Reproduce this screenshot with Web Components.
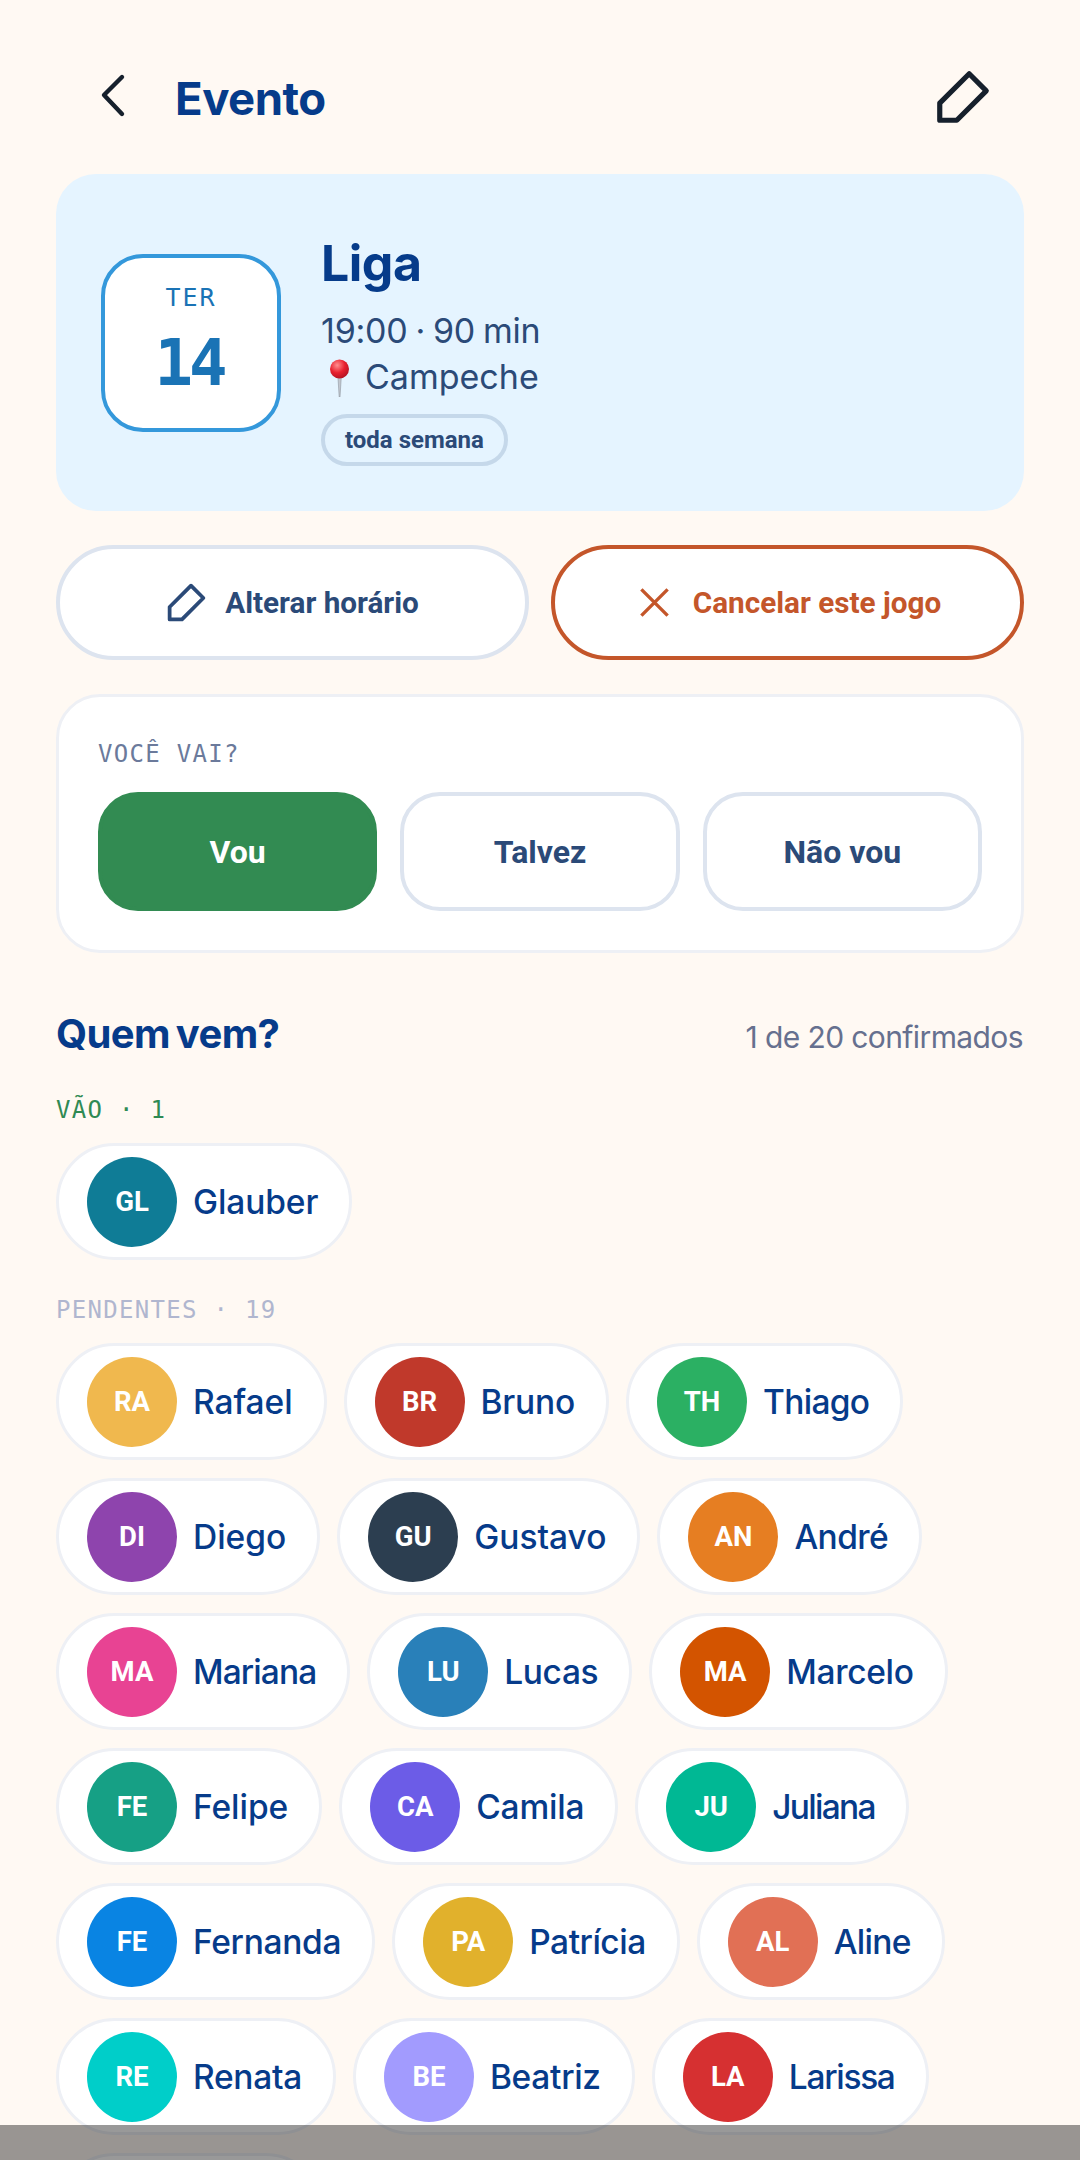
<!DOCTYPE html>
<html lang="pt-BR">
<head>
<meta charset="utf-8">
<title>Evento</title>
<style>
  html, body { margin: 0; height: 2160px; overflow: hidden; }
  body { background: #fff9f3; font-family: 'Inter', 'Noto Sans', sans-serif; }
  main { display: flex; flex-direction: column; padding: 0 56px; }
</style>
</head>
<body>
<main>
  <evento-header titulo="Evento"></evento-header>
  <evento-hero dia="TER" numero="14" nome="Liga" horario="19:00 · 90 min" local="Campeche" tag="toda semana"></evento-hero>
  <evento-acoes></evento-acoes>
  <evento-rsvp></evento-rsvp>
  <evento-titulo-secao></evento-titulo-secao>

  <evento-grupo rotulo="VÃO · 1" cor="#2f8a53">
    <evento-pessoa nome="Glauber" iniciais="GL" cor="#0f7c96" ajuste="-0.1"></evento-pessoa>
  </evento-grupo>

  <evento-grupo rotulo="PENDENTES · 19" cor="#b0b6cf">
    <evento-pessoa nome="Rafael" iniciais="RA" cor="#f0b84e" ajuste="-0.05"></evento-pessoa>
    <evento-pessoa nome="Bruno" iniciais="BR" cor="#c0392b" ajuste="-0.2"></evento-pessoa>
    <evento-pessoa nome="Thiago" iniciais="TH" cor="#2bb063" ajuste="-0.7"></evento-pessoa>
    <evento-pessoa nome="Diego" iniciais="DI" cor="#8e44ad" ajuste="0"></evento-pessoa>
    <evento-pessoa nome="Gustavo" iniciais="GU" cor="#2c3e50" ajuste="0"></evento-pessoa>
    <evento-pessoa nome="André" iniciais="AN" cor="#e67e22" ajuste="-0.6"></evento-pessoa>
    <evento-pessoa nome="Mariana" iniciais="MA" cor="#e84393" ajuste="-0.9"></evento-pessoa>
    <evento-pessoa nome="Lucas" iniciais="LU" cor="#2980b9" ajuste="-0.4"></evento-pessoa>
    <evento-pessoa nome="Marcelo" iniciais="MA" cor="#d35400" ajuste="-0.3"></evento-pessoa>
    <evento-pessoa nome="Felipe" iniciais="FE" cor="#16a085" ajuste="-0.05"></evento-pessoa>
    <evento-pessoa nome="Camila" iniciais="CA" cor="#6c5ce7" ajuste="-0.2"></evento-pessoa>
    <evento-pessoa nome="Juliana" iniciais="JU" cor="#00b894" ajuste="-1.7"></evento-pessoa>
    <evento-pessoa nome="Fernanda" iniciais="FE" cor="#0984e3" ajuste="-0.3"></evento-pessoa>
    <evento-pessoa nome="Patrícia" iniciais="PA" cor="#e1b12c" ajuste="-0.5"></evento-pessoa>
    <evento-pessoa nome="Aline" iniciais="AL" cor="#e17055" ajuste="-0.7"></evento-pessoa>
    <evento-pessoa nome="Renata" iniciais="RE" cor="#00cec9" ajuste="-0.3"></evento-pessoa>
    <evento-pessoa nome="Beatriz" iniciais="BE" cor="#a29bfe" ajuste="-0.3"></evento-pessoa>
    <evento-pessoa nome="Larissa" iniciais="LA" cor="#d63031" ajuste="-1.3"></evento-pessoa>
    <evento-pessoa nome="" iniciais="" cor="transparent" style="width: 268px"></evento-pessoa>
  </evento-grupo>
</main>
<barra-sistema></barra-sistema>

<script>
const PENCIL = `<path d="M14.4 3 21 9.6 9.6 21H3v-6.6z" fill="none" stroke="currentColor" stroke-width="2" stroke-linejoin="round"/>`;

class EventoHeader extends HTMLElement {
  constructor() {
    super();
    this.attachShadow({ mode: 'open' });
  }

  connectedCallback() {
    this.shadowRoot.innerHTML = `
      <style>
        :host { display: flex; align-items: center; box-sizing: border-box; height: 174px; padding-top: 22px; color: #16202c; }
        .back { width: 34px; height: 48px; margin: -6px 0 0 42px; flex: none; }
        h1 { margin: 0 0 0 43px; font: 700 45.5px 'Inter', sans-serif; letter-spacing: -0.5px; color: #063b8a; flex: 1; }
        .edit { width: 62px; height: 62px; margin: -3px 30px 0 0; flex: none; }
      </style>
      <svg class="back" viewBox="0 0 34 48"><path d="M24 6 6 24l18 19" fill="none" stroke="currentColor" stroke-width="4.4" stroke-linecap="round" stroke-linejoin="round"/></svg>
      <h1>${this.getAttribute('titulo')}</h1>
      <svg class="edit" viewBox="0 0 24 24">${PENCIL}</svg>
    `;
  }
}

class EventoHero extends HTMLElement {
  constructor() {
    super();
    this.attachShadow({ mode: 'open' });
  }

  connectedCallback() {
    const a = (n) => this.getAttribute(n);
    this.shadowRoot.innerHTML = `
      <style>
        :host { display: flex; align-items: center; gap: 40px; box-sizing: border-box; height: 337px; padding: 0 45px; background: #e5f4ff; border-radius: 40px; }
        .data { box-sizing: border-box; width: 180px; height: 178px; flex: none; display: flex; flex-direction: column; align-items: center; background: #fff; border: 4px solid #3498db; border-radius: 42px; color: #1a73b5; }
        .dia { margin-top: 22px; font: 400 25px/36px 'DejaVu Sans Mono', monospace; letter-spacing: 2px; }
        .num { margin: 11px 4px 0 0; font: 700 64px/72px 'DejaVu Sans Mono', monospace; letter-spacing: -4px; }
        h2 { margin: 0 0 14px; font: 700 50px/62px 'Inter', sans-serif; letter-spacing: -0.5px; color: #063b8a; }
        p { margin: 0; font: 400 34px/46px 'Inter', sans-serif; color: #2b4a78; }
        .hora { letter-spacing: -0.2px; word-spacing: -1.5px; }
        .info { display: flex; flex-direction: column; align-items: flex-start; margin-top: 12px; }
        .local { display: flex; align-items: center; gap: 6px; }
        .pin { width: 38px; height: 40px; }
        .tag { box-sizing: border-box; height: 52px; margin-top: 14px; padding: 0 20px; display: flex; align-items: center; border: 4px solid #c5d8ea; border-radius: 26px; font: 700 24px 'Roboto', sans-serif; color: #2b4a78; }
      </style>
      <div class="data"><span class="dia">${a('dia')}</span><span class="num">${a('numero')}</span></div>
      <div class="info">
        <h2>${a('nome')}</h2>
        <p class="hora">${a('horario')}</p>
        <p class="local">
          <svg class="pin" viewBox="0 0 38 40">
            <defs><radialGradient id="g" cx=".38" cy=".3" r=".8"><stop offset="0" stop-color="#ff8f8f"/><stop offset=".5" stop-color="#e8202f"/><stop offset="1" stop-color="#a80f1f"/></radialGradient></defs>
            <path d="M16.8 18h3.6l-1.4 22h-.8z" fill="#c3c8d0" stroke="#8f959f" stroke-width=".6"/>
            <circle cx="18.5" cy="12" r="9.5" fill="url(#g)"/>
          </svg>
          <span>${a('local')}</span>
        </p>
        <span class="tag">${a('tag')}</span>
      </div>
    `;
  }
}

class EventoAcoes extends HTMLElement {
  constructor() {
    super();
    this.attachShadow({ mode: 'open' });
  }

  connectedCallback() {
    this.shadowRoot.innerHTML = `
      <style>
        :host { display: grid; grid-template-columns: 1fr 1fr; gap: 22px; margin-top: 34px; }
        div { box-sizing: border-box; height: 115px; display: flex; align-items: center; justify-content: center; gap: 16px; padding-right: 2px; background: #fff; border: 4px solid #dde4ef; border-radius: 58px; font: 700 29.7px 'Roboto', sans-serif; color: #2b4a78; }
        .cancel { border-color: #c4562a; color: #c4562a; }
        svg { width: 45px; height: 45px; }
      </style>
      <div><svg viewBox="0 0 24 24">${PENCIL}</svg>Alterar horário</div>
      <div class="cancel"><svg viewBox="0 0 24 24"><path d="M5 5l14 14M19 5 5 19" fill="none" stroke="currentColor" stroke-width="1.8"/></svg>Cancelar este jogo</div>
    `;
  }
}

class EventoRsvp extends HTMLElement {
  constructor() {
    super();
    this.attachShadow({ mode: 'open' });
  }

  connectedCallback() {
    this.shadowRoot.innerHTML = `
      <style>
        :host { display: block; box-sizing: border-box; height: 259px; margin-top: 34px; padding: 39px 39px 0 39px; background: #fff; border: 3px solid #eef0f5; border-radius: 44px; }
        .rotulo { display: block; font: 400 24px/36px 'DejaVu Sans Mono', monospace; letter-spacing: 1.3px; color: #6b7a9b; }
        .opcoes { display: grid; grid-template-columns: repeat(3, 1fr); gap: 23px; margin-top: 20px; }
        .op { box-sizing: border-box; height: 119px; display: flex; align-items: center; justify-content: center; border: 4px solid #dde4ef; border-radius: 40px; font: 700 32px 'Roboto', sans-serif; color: #2b4a78; }
        .sim { background: #328b52; border-color: #328b52; color: #fff; }
      </style>
      <span class="rotulo">VOCÊ VAI?</span>
      <div class="opcoes">
        <div class="op sim">Vou</div>
        <div class="op">Talvez</div>
        <div class="op">Não vou</div>
      </div>
    `;
  }
}

class EventoTituloSecao extends HTMLElement {
  constructor() {
    super();
    this.attachShadow({ mode: 'open' });
  }

  connectedCallback() {
    this.shadowRoot.innerHTML = `
      <style>
        :host { display: flex; align-items: baseline; justify-content: space-between; margin-top: 55px; }
        h3 { margin: 0; font: 700 40px/52px 'Inter', sans-serif; letter-spacing: -0.6px; word-spacing: -3px; color: #063b8a; }
        span { margin-right: 1px; font: 400 30px 'Inter', sans-serif; letter-spacing: -0.6px; color: #66708f; }
      </style>
      <h3>Quem vem?</h3>
      <span>1 de 20 confirmados</span>
    `;
  }
}

class EventoGrupo extends HTMLElement {
  constructor() {
    super();
    this.attachShadow({ mode: 'open' });
  }

  connectedCallback() {
    this.shadowRoot.innerHTML = `
      <style>
        :host { display: block; margin-top: 35px; }
        :host + :host { margin-top: 37px; }
        .rotulo { display: block; font: 400 24px/30px 'DejaVu Sans Mono', monospace; letter-spacing: 1.3px; color: ${this.getAttribute('cor')}; }
        .lista { display: flex; flex-wrap: wrap; gap: 18px 17px; margin-top: 18px; }
      </style>
      <span class="rotulo">${this.getAttribute('rotulo')}</span>
      <div class="lista"><slot></slot></div>
    `;
  }
}

class EventoPessoa extends HTMLElement {
  constructor() {
    super();
    this.attachShadow({ mode: 'open' });
  }

  connectedCallback() {
    // letter-spacing por nome: a fonte original nao esta instalada
    const ajuste = this.getAttribute('ajuste') || '-0.5';
    this.shadowRoot.innerHTML = `
      <style>
        :host { display: flex; align-items: center; gap: 16px; box-sizing: border-box; height: 117px; padding: 0 31px 0 28px; background: #fff; border: 3px solid #eef0f5; border-radius: 59px; }
        .av { width: 90px; height: 90px; flex: none; display: flex; align-items: center; justify-content: center; border-radius: 50%; background: ${this.getAttribute('cor')}; font: 700 27.5px 'Roboto', sans-serif; color: #fff; }
        .nome { font: 500 33.5px 'Inter', sans-serif; letter-spacing: ${ajuste}px; color: #063b8a; }
      </style>
      <span class="av">${this.getAttribute('iniciais')}</span>
      <span class="nome">${this.getAttribute('nome')}</span>
    `;
  }
}

class BarraSistema extends HTMLElement {
  constructor() {
    super();
    this.attachShadow({ mode: 'open' });
  }

  connectedCallback() {
    this.shadowRoot.innerHTML = `
      <style>
        :host { position: fixed; left: 0; right: 0; bottom: 0; height: 35px; background: rgba(0, 0, 0, 0.4); }
      </style>
    `;
  }
}

customElements.define('evento-header', EventoHeader);
customElements.define('evento-hero', EventoHero);
customElements.define('evento-acoes', EventoAcoes);
customElements.define('evento-rsvp', EventoRsvp);
customElements.define('evento-titulo-secao', EventoTituloSecao);
customElements.define('evento-grupo', EventoGrupo);
customElements.define('evento-pessoa', EventoPessoa);
customElements.define('barra-sistema', BarraSistema);
</script>
</body>
</html>
